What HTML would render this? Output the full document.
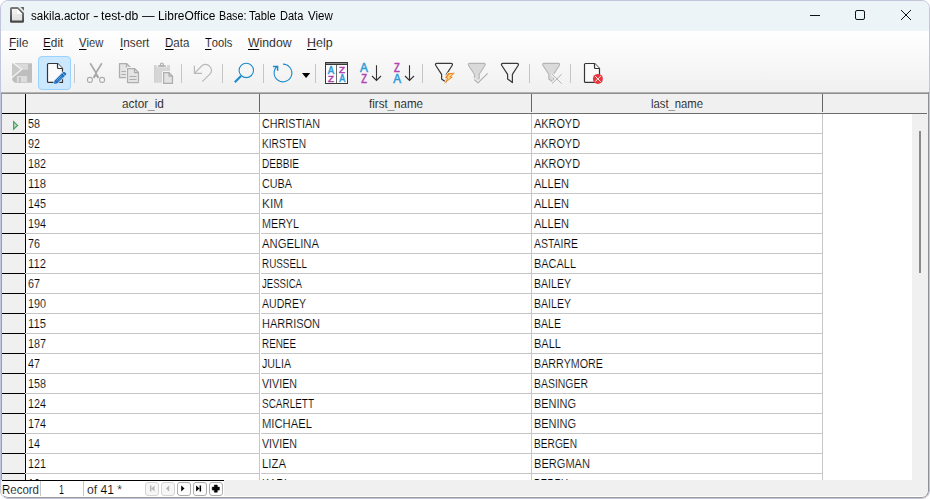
<!DOCTYPE html>
<html><head><meta charset="utf-8"><title>sakila.actor - test-db — LibreOffice Base: Table Data View</title>
<style>
html,body{margin:0;padding:0;background:#fff;}
body{width:930px;height:499px;overflow:hidden;position:relative;font-family:"Liberation Sans",sans-serif;font-size:12px;color:#000;}
#win{position:absolute;left:0;top:0;width:930px;height:499px;box-sizing:border-box;border:1px solid #c3c5da;border-radius:8px;background:#f0f0f0;overflow:hidden;}
#in{position:absolute;left:-1px;top:-1px;width:930px;height:499px;}
.a{position:absolute;}
.t{-webkit-text-stroke:0.15px #fff;position:absolute;white-space:pre;line-height:14px;height:14px;transform-origin:0 50%;display:block;}
.t u{text-decoration:none;border-bottom:1px solid #000;display:inline-block;line-height:12px;}
#title{left:1px;top:1px;width:928px;height:30px;background:#edf4f8;}
#bars{left:1px;top:31px;width:928px;height:61px;background:linear-gradient(#ffffff,#f0f0f0);}
.sep{position:absolute;width:1px;height:19px;top:64px;background:#c6c6c6;}
.hl{position:absolute;height:1px;}
.vl{position:absolute;width:1px;}
.nb{position:absolute;top:482px;width:14px;height:14px;box-sizing:border-box;border:1px solid #adadad;border-radius:3px;background:#fdfdfd;}
.nb.d{border-color:#d4d4d4;background:#f6f6f6;}
svg{position:absolute;overflow:visible;}
</style></head><body>
<div id="win"><div id="in">
<div class="a" id="title"></div>
<div class="a" id="bars"></div>

<svg style="left:0;top:0" width="32" height="30" viewBox="0 0 32 30">
<defs><linearGradient id="ig" x1="0" y1="0" x2="0" y2="1"><stop offset="0" stop-color="#f6f6f6"/><stop offset="1" stop-color="#dedede"/></linearGradient>
<linearGradient id="ib" x1="0" y1="0" x2="0" y2="1"><stop offset="0" stop-color="#7c7c7c"/><stop offset="1" stop-color="#444444"/></linearGradient></defs>
<path d="M11.6 7 H18 L24 13 V21.2 Q24 22.8 22.4 22.8 H11.6 Q10 22.8 10 21.2 V8.6 Q10 7 11.6 7 Z" fill="url(#ib)"/>
<path d="M12 8.9 H17.3 L22.1 13.7 V20.6 H12 Z" fill="url(#ig)"/>
<path d="M16.6 8.9 H17.3 L22.1 13.7 V14.6 H16.6 Z" fill="#ffffff"/>
<path d="M16.6 14.9 H22.1" stroke="#d2d2d2" stroke-width="0.7"/><path d="M16.3 9 V14.8" stroke="#e2e2e2" stroke-width="0.6"/>
<path d="M20.3 7 H24 V10.7 Z" fill="#686868"/>
</svg>
<div class="a" style="left:0;top:9px;height:14px;width:340px;will-change:transform"><span class="t" style="left:30.62px;top:0;transform:scaleX(0.9667);-webkit-text-stroke-width:0">sakila.actor</span> <span class="t" style="left:92.70px;top:0;transform:scaleX(1.4000);-webkit-text-stroke-width:0">-</span> <span class="t" style="left:101.35px;top:0;transform:scaleX(1.0139);-webkit-text-stroke-width:0">test-db</span> <span class="t" style="left:142.40px;top:0;transform:scaleX(1.0500);-webkit-text-stroke-width:0">—</span> <span class="t" style="left:158.21px;top:0;transform:scaleX(0.9920);-webkit-text-stroke-width:0">LibreOffice</span> <span class="t" style="left:219.01px;top:0;transform:scaleX(0.8939);-webkit-text-stroke-width:0">Base:</span> <span class="t" style="left:249.27px;top:0;transform:scaleX(0.9321);-webkit-text-stroke-width:0">Table</span> <span class="t" style="left:279.78px;top:0;transform:scaleX(0.9184);-webkit-text-stroke-width:0">Data</span> <span class="t" style="left:307.70px;top:0;transform:scaleX(0.9592);-webkit-text-stroke-width:0">View</span></div>
<svg style="left:800px;top:0" width="128" height="30" viewBox="0 0 128 30" fill="none" stroke="#111" stroke-width="1">
<path d="M10 15.5 H20"/>
<rect x="55.5" y="10.5" width="9" height="9" rx="1.5"/>
<path d="M101 10 L111 20 M111 10 L101 20"/>
</svg>
<span class="t" style="left:8.8px;top:36px;transform:scaleX(0.9977);-webkit-text-stroke-color:#fbfbfb;"><u>F</u>ile</span>
<span class="t" style="left:42.8px;top:36px;transform:scaleX(0.9813);-webkit-text-stroke-color:#fbfbfb;"><u>E</u>dit</span>
<span class="t" style="left:79px;top:36px;transform:scaleX(0.9303);-webkit-text-stroke-color:#fbfbfb;"><u>V</u>iew</span>
<span class="t" style="left:119.7px;top:36px;transform:scaleX(0.9762);-webkit-text-stroke-color:#fbfbfb;"><u>I</u>nsert</span>
<span class="t" style="left:164.7px;top:36px;transform:scaleX(0.9582);-webkit-text-stroke-color:#fbfbfb;"><u>D</u>ata</span>
<span class="t" style="left:205.2px;top:36px;transform:scaleX(0.9281);-webkit-text-stroke-color:#fbfbfb;"><u>T</u>ools</span>
<span class="t" style="left:248.1px;top:36px;transform:scaleX(1.0214);-webkit-text-stroke-color:#fbfbfb;"><u>W</u>indow</span>
<span class="t" style="left:307.3px;top:36px;transform:scaleX(1.0370);-webkit-text-stroke-color:#fbfbfb;"><u>H</u>elp</span>
<div class="a" style="left:38px;top:56px;width:33px;height:34px;box-sizing:border-box;border:1px solid #99d1ff;border-radius:4px;background:#cce8ff"></div>
<div class="sep" style="left:74px"></div>
<div class="sep" style="left:181px"></div>
<div class="sep" style="left:222px"></div>
<div class="sep" style="left:263px"></div>
<div class="sep" style="left:315px"></div>
<div class="sep" style="left:422px"></div>
<div class="sep" style="left:529px"></div>
<div class="sep" style="left:570px"></div>
<svg style="left:0;top:54px" width="930" height="40" viewBox="0 54 930 40" fill="none">
<g>
<path d="M12.2 63.2 H32 V82.8 H14.8 L12.2 80.2 Z" fill="#bebebe"/>
<path d="M16 64 H28 V69.8 H16 Z" fill="#dadada"/>
<path d="M16.9 76 H27.1 V82.1 H16.9 Z" fill="#dcdcdc"/>
<path d="M19 77.2 H20.8 V82.8 H19 Z" fill="#bebebe"/>
<path d="M12.2 63.2 L21.2 69.5 L12.2 76.8 Z" fill="#c9c9c9"/>
<path d="M13 62.8 L21.7 69.5 L12 77.5" fill="none" stroke="#f7f7f7" stroke-width="1.1"/>
</g>
<g>
<path d="M48.5 63.5 H57.5 L62.5 68.5 V82.4 H48.5 Q47.5 82.4 47.5 81.4 V64.5 Q47.5 63.5 48.5 63.5 Z" fill="#fafafa" stroke="#353535" stroke-width="1.2" stroke-linejoin="round"/>
<path d="M57.5 63.5 V67.5 Q57.5 68.5 58.5 68.5 H62.5" fill="#fafafa" stroke="#353535" stroke-width="1.2" stroke-linejoin="round"/>
<path d="M53.9 83.9 L54.7 80.4 L62.9 72.2 Q63.9 71.3 64.9 72.2 L65.9 73.2 Q66.7 74.1 65.9 75 L57.6 83.2 Z" fill="#1c6dbe" stroke="#e8f2fb" stroke-width="1.2" paint-order="stroke" stroke-linejoin="round"/>
<path d="M56.5 80.6 L61.6 75.5 M57.7 81.8 L62.8 76.7" stroke="#7ab2e8" stroke-width="0.8"/>
<path d="M62.2 73 L65.1 75.9" stroke="#a8d0f4" stroke-width="0.8"/>
<path d="M53.9 83.9 L54.5 81.6 L56.4 83.4 Z" fill="#4f97dc"/>
</g>
<g stroke="#ababab" fill="none">
<path d="M90.2 63.3 L96 72.8 L101.8 63.3" stroke-width="1.7" stroke-linejoin="miter"/>
<path d="M93.5 77.8 L96 74.2 L98.5 77.8" stroke-width="2.1" stroke="#a6a6a6"/>
<circle cx="89.9" cy="79.9" r="2.5" fill="#f7f7f7" stroke-width="1.1"/><circle cx="102.1" cy="79.9" r="2.5" fill="#f7f7f7" stroke-width="1.1"/>
</g>
<g stroke="#adadad" stroke-width="1.25" fill="#e4e4e4" stroke-linejoin="round">
<path d="M119.5 63.5 H126.5 L130.5 67.5 V77.5 H119.5 Z"/>
<path d="M126.5 63.5 V67.5 H130.5" fill="none"/>
<path d="M121.5 71.5 H127 M121.5 74.5 H127" stroke-width="1"/>
<path d="M127.5 68.5 H134.5 L138.5 72.5 V82.5 H127.5 Z" stroke="#f6f6f6" stroke-width="3.2"/>
<path d="M127.5 68.5 H134.5 L138.5 72.5 V82.5 H127.5 Z"/>
<path d="M134.5 68.5 V72.5 H138.5" fill="none"/>
<path d="M129.5 76.5 H136.5 M129.5 79.5 H136.5" stroke-width="1"/>
</g>
<g>
<path d="M154.2 65.1 H170 V82.8 H154.2 Z" fill="#d6d6d6"/>
<path d="M154.6 65.1 V82.8" stroke="#cdcdcd" stroke-width="0.8"/>
<path d="M156.8 65 H167 V67.3 H156.8 Z" fill="#f6f6f6"/>
<circle cx="161.9" cy="64.5" r="1.5" fill="#efefef" stroke="#adadad" stroke-width="1.1"/>
<path d="M158 65.2 H165.8 V66.8 H158 Z" fill="#adadad"/>
<path d="M163.6 72.6 H169 L172.5 76.1 V83.4 H163.6 Z" fill="#e3e3e3" stroke="#f5f5f5" stroke-width="3.2" stroke-linejoin="round"/>
<path d="M163.6 72.6 H169 L172.5 76.1 V83.4 H163.6 Z" fill="#e3e3e3" stroke="#adadad" stroke-width="1.25" stroke-linejoin="round"/>
<path d="M169 72.6 V76.1 H172.5" fill="none" stroke="#adadad" stroke-width="1.25" stroke-linejoin="round"/>
</g>
<g stroke="#b9b9b9" stroke-width="1.2">
<path d="M194.4 65.8 V73.4 H202"/>
<path d="M194.4 73.4 L202.4 65.3 A5.9 5.9 0 0 1 210.3 73.7 L202.3 81.6"/>
</g>
<g stroke="#1e8bcd">
<circle cx="246.3" cy="70.4" r="7.2" stroke-width="1.1"/>
<path d="M241 76 L234.8 82.3" stroke-width="2.2" stroke-linecap="butt"/>
</g>
<g stroke="#1e8bcd" stroke-width="1.1">
<path d="M283 64.1 A8.85 8.85 0 1 1 277.5 66"/>
<path d="M272.9 66.5 H277.6 V70.8" stroke-width="1.5"/>
</g>
<path d="M302 73 H310.2 L306.1 78 Z" fill="#000"/>
<g>
<rect x="325.5" y="62.5" width="22" height="21" fill="#fdfdfd" stroke="#383838" stroke-width="1"/>
<rect x="325" y="62" width="23" height="3" fill="#383838"/>
<path d="M326 63.5 H347" stroke="#8c8c8c" stroke-width="1"/>
<path d="M336.5 65 V83" stroke="#6a6a6a" stroke-width="1"/>
</g>
<text x="327.80" y="73.60" font-family="Liberation Sans, sans-serif" font-size="10.20" fill="#2d9bd8" textLength="6.40" lengthAdjust="spacingAndGlyphs" stroke="#2d9bd8" stroke-width="0.5">A</text>
<text x="328.00" y="81.60" font-family="Liberation Sans, sans-serif" font-size="9.22" fill="#b242b2" textLength="5.90" lengthAdjust="spacingAndGlyphs" stroke="#b242b2" stroke-width="0.5">Z</text>
<text x="339.00" y="72.90" font-family="Liberation Sans, sans-serif" font-size="9.64" fill="#b242b2" textLength="6.00" lengthAdjust="spacingAndGlyphs" stroke="#b242b2" stroke-width="0.5">Z</text>
<text x="339.20" y="81.70" font-family="Liberation Sans, sans-serif" font-size="10.06" fill="#2d9bd8" textLength="6.00" lengthAdjust="spacingAndGlyphs" stroke="#2d9bd8" stroke-width="0.5">A</text>
<text x="360.10" y="71.70" font-family="Liberation Sans, sans-serif" font-size="12.15" fill="#2d9bd8" textLength="7.90" lengthAdjust="spacingAndGlyphs" stroke="#2d9bd8" stroke-width="0.5">A</text>
<text x="361.20" y="82.70" font-family="Liberation Sans, sans-serif" font-size="12.01" fill="#b242b2" textLength="5.70" lengthAdjust="spacingAndGlyphs" stroke="#b242b2" stroke-width="0.5">Z</text>
<path d="M376.5 65.2 V80.4 M372 76 L376.5 80.5 L381 76" stroke="#333" stroke-width="1.1"/>
<text x="394.10" y="71.70" font-family="Liberation Sans, sans-serif" font-size="12.01" fill="#b242b2" textLength="5.80" lengthAdjust="spacingAndGlyphs" stroke="#b242b2" stroke-width="0.5">Z</text>
<text x="393.20" y="82.70" font-family="Liberation Sans, sans-serif" font-size="12.15" fill="#2d9bd8" textLength="7.80" lengthAdjust="spacingAndGlyphs" stroke="#2d9bd8" stroke-width="0.5">A</text>
<path d="M409.5 65.2 V80.4 M405 76 L409.5 80.5 L414 76" stroke="#333" stroke-width="1.1"/>
<path d="M436.80 63.4 H451.10 Q453.10 63.4 452.10 65.5 L446.40 74.3 V82.5 L441.60 79 V74.3 L435.80 65.5 Q434.80 63.4 436.80 63.4 Z" stroke="#3a3a38" stroke-width="1.25" fill="none" stroke-linejoin="round"/>
<path d="M448.2 72.9 L455 72.7 L451.1 76.6 L453 77.1 L444 84 L447.1 78.4 L445 77.8 Z" fill="#ef8c2c" stroke="#f8f8f8" stroke-width="1.4" paint-order="stroke"/>
<path d="M449.4 74.2 L452.4 74.1 L449.2 77.1 L450.8 77.6 L446.8 80.8 L448.6 77.9 L447 77.4 Z" fill="#f9dc8c"/>
<path d="M469.60 63.4 H483.90 Q485.90 63.4 484.90 65.5 L479.20 74.3 V82.5 L474.40 79 V74.3 L468.60 65.5 Q467.60 63.4 469.60 63.4 Z" stroke="#b4b4b4" stroke-width="1.1" fill="#dadada" stroke-linejoin="round"/>
<path d="M473.6 78.9 L478 83 L488.2 73" stroke="#f5f5f5" stroke-width="3.4"/>
<path d="M474.3 79.5 L478 82.9 L487.6 73.4" stroke="#b2b2b2" stroke-width="1.3"/>
<path d="M502.80 63.4 H517.10 Q519.10 63.4 518.10 65.5 L512.40 74.3 V82.5 L507.60 79 V74.3 L501.80 65.5 Q500.80 63.4 502.80 63.4 Z" stroke="#3a3a38" stroke-width="1.25" fill="none" stroke-linejoin="round"/>
<path d="M544.00 63.4 H558.30 Q560.30 63.4 559.30 65.5 L553.60 74.3 V82.5 L548.80 79 V74.3 L543.00 65.5 Q542.00 63.4 544.00 63.4 Z" stroke="#b4b4b4" stroke-width="1.1" fill="#dadada" stroke-linejoin="round"/>
<path d="M552 74.2 L561.7 83.7 M561.7 74.2 L552 83.7" stroke="#f5f5f5" stroke-width="3"/>
<path d="M552 74.2 L561.7 83.7 M561.7 74.2 L552 83.7" stroke="#b0b0b0" stroke-width="1"/>
<g>
<path d="M585.5 63.5 H594.5 L599.5 68.5 V82.4 H585.5 Q584.5 82.4 584.5 81.4 V64.5 Q584.5 63.5 585.5 63.5 Z" fill="#fafafa" stroke="#353535" stroke-width="1.2" stroke-linejoin="round"/>
<path d="M594.5 63.5 V67.5 Q594.5 68.5 595.5 68.5 H599.5" fill="#fafafa" stroke="#353535" stroke-width="1.2" stroke-linejoin="round"/>
<circle cx="597.9" cy="78.9" r="5" fill="#e8383f"/>
<path d="M595.1 76.1 L600.7 81.7 M600.7 76.1 L595.1 81.7" stroke="#fff" stroke-width="0.9"/>
</g>
</svg>
<div class="a" style="left:1px;top:92px;width:927px;height:1px;background:#b4b4b4"></div>
<div class="a" style="left:1px;top:93px;width:927px;height:1px;background:#8e8e8e"></div>
<div class="a" style="left:26px;top:114px;width:886px;height:366px;background:#fff"></div>
<div class="hl" style="left:2px;top:113px;width:24px;background:#000"></div>
<div class="hl" style="left:26px;top:113px;width:901px;background:#6e6e6e"></div>
<div class="vl" style="left:25px;top:94px;height:386px;background:#000"></div>
<div class="vl" style="left:259px;top:94px;height:18px;background:#666"></div>
<div class="vl" style="left:259px;top:114px;height:366px;background:#c6c6c6"></div>
<div class="vl" style="left:531px;top:94px;height:18px;background:#666"></div>
<div class="vl" style="left:531px;top:114px;height:366px;background:#c6c6c6"></div>
<div class="vl" style="left:822px;top:94px;height:18px;background:#666"></div>
<div class="vl" style="left:822px;top:114px;height:366px;background:#c6c6c6"></div>
<div class="vl" style="left:1px;top:94px;height:386px;background:#a0a0a0"></div>
<div class="hl" style="left:2px;top:133px;width:23px;background:#000"></div>
<div class="hl" style="left:26px;top:133px;width:797px;background:#c6c6c6"></div>
<div class="hl" style="left:25px;top:133px;width:1px;background:#e8e8e8"></div>
<div class="hl" style="left:260px;top:133px;width:1px;background:#fff"></div>
<div class="hl" style="left:2px;top:153px;width:23px;background:#000"></div>
<div class="hl" style="left:26px;top:153px;width:797px;background:#c6c6c6"></div>
<div class="hl" style="left:25px;top:153px;width:1px;background:#e8e8e8"></div>
<div class="hl" style="left:260px;top:153px;width:1px;background:#fff"></div>
<div class="hl" style="left:2px;top:173px;width:23px;background:#000"></div>
<div class="hl" style="left:26px;top:173px;width:797px;background:#c6c6c6"></div>
<div class="hl" style="left:25px;top:173px;width:1px;background:#e8e8e8"></div>
<div class="hl" style="left:260px;top:173px;width:1px;background:#fff"></div>
<div class="hl" style="left:2px;top:193px;width:23px;background:#000"></div>
<div class="hl" style="left:26px;top:193px;width:797px;background:#c6c6c6"></div>
<div class="hl" style="left:25px;top:193px;width:1px;background:#e8e8e8"></div>
<div class="hl" style="left:260px;top:193px;width:1px;background:#fff"></div>
<div class="hl" style="left:2px;top:213px;width:23px;background:#000"></div>
<div class="hl" style="left:26px;top:213px;width:797px;background:#c6c6c6"></div>
<div class="hl" style="left:25px;top:213px;width:1px;background:#e8e8e8"></div>
<div class="hl" style="left:260px;top:213px;width:1px;background:#fff"></div>
<div class="hl" style="left:2px;top:233px;width:23px;background:#000"></div>
<div class="hl" style="left:26px;top:233px;width:797px;background:#c6c6c6"></div>
<div class="hl" style="left:25px;top:233px;width:1px;background:#e8e8e8"></div>
<div class="hl" style="left:260px;top:233px;width:1px;background:#fff"></div>
<div class="hl" style="left:2px;top:253px;width:23px;background:#000"></div>
<div class="hl" style="left:26px;top:253px;width:797px;background:#c6c6c6"></div>
<div class="hl" style="left:25px;top:253px;width:1px;background:#e8e8e8"></div>
<div class="hl" style="left:260px;top:253px;width:1px;background:#fff"></div>
<div class="hl" style="left:2px;top:273px;width:23px;background:#000"></div>
<div class="hl" style="left:26px;top:273px;width:797px;background:#c6c6c6"></div>
<div class="hl" style="left:25px;top:273px;width:1px;background:#e8e8e8"></div>
<div class="hl" style="left:260px;top:273px;width:1px;background:#fff"></div>
<div class="hl" style="left:2px;top:293px;width:23px;background:#000"></div>
<div class="hl" style="left:26px;top:293px;width:797px;background:#c6c6c6"></div>
<div class="hl" style="left:25px;top:293px;width:1px;background:#e8e8e8"></div>
<div class="hl" style="left:260px;top:293px;width:1px;background:#fff"></div>
<div class="hl" style="left:2px;top:313px;width:23px;background:#000"></div>
<div class="hl" style="left:26px;top:313px;width:797px;background:#c6c6c6"></div>
<div class="hl" style="left:25px;top:313px;width:1px;background:#e8e8e8"></div>
<div class="hl" style="left:260px;top:313px;width:1px;background:#fff"></div>
<div class="hl" style="left:2px;top:333px;width:23px;background:#000"></div>
<div class="hl" style="left:26px;top:333px;width:797px;background:#c6c6c6"></div>
<div class="hl" style="left:25px;top:333px;width:1px;background:#e8e8e8"></div>
<div class="hl" style="left:260px;top:333px;width:1px;background:#fff"></div>
<div class="hl" style="left:2px;top:353px;width:23px;background:#000"></div>
<div class="hl" style="left:26px;top:353px;width:797px;background:#c6c6c6"></div>
<div class="hl" style="left:25px;top:353px;width:1px;background:#e8e8e8"></div>
<div class="hl" style="left:260px;top:353px;width:1px;background:#fff"></div>
<div class="hl" style="left:2px;top:373px;width:23px;background:#000"></div>
<div class="hl" style="left:26px;top:373px;width:797px;background:#c6c6c6"></div>
<div class="hl" style="left:25px;top:373px;width:1px;background:#e8e8e8"></div>
<div class="hl" style="left:260px;top:373px;width:1px;background:#fff"></div>
<div class="hl" style="left:2px;top:393px;width:23px;background:#000"></div>
<div class="hl" style="left:26px;top:393px;width:797px;background:#c6c6c6"></div>
<div class="hl" style="left:25px;top:393px;width:1px;background:#e8e8e8"></div>
<div class="hl" style="left:260px;top:393px;width:1px;background:#fff"></div>
<div class="hl" style="left:2px;top:413px;width:23px;background:#000"></div>
<div class="hl" style="left:26px;top:413px;width:797px;background:#c6c6c6"></div>
<div class="hl" style="left:25px;top:413px;width:1px;background:#e8e8e8"></div>
<div class="hl" style="left:260px;top:413px;width:1px;background:#fff"></div>
<div class="hl" style="left:2px;top:433px;width:23px;background:#000"></div>
<div class="hl" style="left:26px;top:433px;width:797px;background:#c6c6c6"></div>
<div class="hl" style="left:25px;top:433px;width:1px;background:#e8e8e8"></div>
<div class="hl" style="left:260px;top:433px;width:1px;background:#fff"></div>
<div class="hl" style="left:2px;top:453px;width:23px;background:#000"></div>
<div class="hl" style="left:26px;top:453px;width:797px;background:#c6c6c6"></div>
<div class="hl" style="left:25px;top:453px;width:1px;background:#e8e8e8"></div>
<div class="hl" style="left:260px;top:453px;width:1px;background:#fff"></div>
<div class="hl" style="left:2px;top:473px;width:23px;background:#000"></div>
<div class="hl" style="left:26px;top:473px;width:797px;background:#c6c6c6"></div>
<div class="hl" style="left:25px;top:473px;width:1px;background:#e8e8e8"></div>
<div class="hl" style="left:260px;top:473px;width:1px;background:#fff"></div>
<span class="t" style="left:122px;top:97px;transform:scaleX(0.9789);-webkit-text-stroke-color:#f0f0f0;">actor_id</span>
<span class="t" style="left:369px;top:97px;transform:scaleX(0.9637);-webkit-text-stroke-color:#f0f0f0;">first_name</span>
<span class="t" style="left:651px;top:97px;transform:scaleX(0.9391);-webkit-text-stroke-color:#f0f0f0;">last_name</span>
<span class="t" style="left:28px;top:117px;transform:scaleX(0.8982);">58</span>
<span class="t" style="left:262px;top:117px;transform:scaleX(0.8968);">CHRISTIAN</span>
<span class="t" style="left:534px;top:117px;transform:scaleX(0.9075);">AKROYD</span>
<span class="t" style="left:28px;top:137px;transform:scaleX(0.8982);">92</span>
<span class="t" style="left:262px;top:137px;transform:scaleX(0.8459);">KIRSTEN</span>
<span class="t" style="left:534px;top:137px;transform:scaleX(0.9075);">AKROYD</span>
<span class="t" style="left:28px;top:157px;transform:scaleX(0.8986);">182</span>
<span class="t" style="left:262px;top:157px;transform:scaleX(0.8406);">DEBBIE</span>
<span class="t" style="left:534px;top:157px;transform:scaleX(0.9075);">AKROYD</span>
<span class="t" style="left:28px;top:177px;transform:scaleX(0.9404);">118</span>
<span class="t" style="left:262px;top:177px;transform:scaleX(0.8997);">CUBA</span>
<span class="t" style="left:534px;top:177px;transform:scaleX(0.9203);">ALLEN</span>
<span class="t" style="left:28px;top:197px;transform:scaleX(0.8986);">145</span>
<span class="t" style="left:262px;top:197px;transform:scaleX(0.9839);">KIM</span>
<span class="t" style="left:534px;top:197px;transform:scaleX(0.9203);">ALLEN</span>
<span class="t" style="left:28px;top:217px;transform:scaleX(0.8986);">194</span>
<span class="t" style="left:262px;top:217px;transform:scaleX(0.8994);">MERYL</span>
<span class="t" style="left:534px;top:217px;transform:scaleX(0.9203);">ALLEN</span>
<span class="t" style="left:28px;top:237px;transform:scaleX(0.8982);">76</span>
<span class="t" style="left:262px;top:237px;transform:scaleX(0.9392);">ANGELINA</span>
<span class="t" style="left:534px;top:237px;transform:scaleX(0.8718);">ASTAIRE</span>
<span class="t" style="left:28px;top:257px;transform:scaleX(0.9404);">112</span>
<span class="t" style="left:262px;top:257px;transform:scaleX(0.8226);">RUSSELL</span>
<span class="t" style="left:534px;top:257px;transform:scaleX(0.9124);">BACALL</span>
<span class="t" style="left:28px;top:277px;transform:scaleX(0.8982);">67</span>
<span class="t" style="left:262px;top:277px;transform:scaleX(0.7998);">JESSICA</span>
<span class="t" style="left:534px;top:277px;transform:scaleX(0.8803);">BAILEY</span>
<span class="t" style="left:28px;top:297px;transform:scaleX(0.8986);">190</span>
<span class="t" style="left:262px;top:297px;transform:scaleX(0.8797);">AUDREY</span>
<span class="t" style="left:534px;top:297px;transform:scaleX(0.8803);">BAILEY</span>
<span class="t" style="left:28px;top:317px;transform:scaleX(0.9404);">115</span>
<span class="t" style="left:262px;top:317px;transform:scaleX(0.9156);">HARRISON</span>
<span class="t" style="left:534px;top:317px;transform:scaleX(0.8798);">BALE</span>
<span class="t" style="left:28px;top:337px;transform:scaleX(0.8986);">187</span>
<span class="t" style="left:262px;top:337px;transform:scaleX(0.8224);">RENEE</span>
<span class="t" style="left:534px;top:337px;transform:scaleX(0.9196);">BALL</span>
<span class="t" style="left:28px;top:357px;transform:scaleX(0.8982);">47</span>
<span class="t" style="left:262px;top:357px;transform:scaleX(0.8872);">JULIA</span>
<span class="t" style="left:534px;top:357px;transform:scaleX(0.8945);">BARRYMORE</span>
<span class="t" style="left:28px;top:377px;transform:scaleX(0.8986);">158</span>
<span class="t" style="left:262px;top:377px;transform:scaleX(0.8892);">VIVIEN</span>
<span class="t" style="left:534px;top:377px;transform:scaleX(0.8707);">BASINGER</span>
<span class="t" style="left:28px;top:397px;transform:scaleX(0.8986);">124</span>
<span class="t" style="left:262px;top:397px;transform:scaleX(0.8295);">SCARLETT</span>
<span class="t" style="left:534px;top:397px;transform:scaleX(0.9127);">BENING</span>
<span class="t" style="left:28px;top:417px;transform:scaleX(0.8986);">174</span>
<span class="t" style="left:262px;top:417px;transform:scaleX(0.9373);">MICHAEL</span>
<span class="t" style="left:534px;top:417px;transform:scaleX(0.9127);">BENING</span>
<span class="t" style="left:28px;top:437px;transform:scaleX(0.8982);">14</span>
<span class="t" style="left:262px;top:437px;transform:scaleX(0.8892);">VIVIEN</span>
<span class="t" style="left:534px;top:437px;transform:scaleX(0.8483);">BERGEN</span>
<span class="t" style="left:28px;top:457px;transform:scaleX(0.8986);">121</span>
<span class="t" style="left:262px;top:457px;transform:scaleX(0.9470);">LIZA</span>
<span class="t" style="left:534px;top:457px;transform:scaleX(0.9228);">BERGMAN</span>
<span class="t" style="left:28px;top:477px;transform:scaleX(0.8982);">12</span>
<span class="t" style="left:262px;top:477px;transform:scaleX(0.8929);">KARL</span>
<span class="t" style="left:534px;top:477px;transform:scaleX(0.8264);">BERRY</span>
<svg style="left:10px;top:118px" width="10" height="14" viewBox="0 0 10 14"><path d="M3.6 3.6 L7.6 7.4 L3.6 11.2 Z" fill="#b4dcbc" stroke="#3fa05c" stroke-width="1.1" stroke-linejoin="miter"/></svg>
<div class="a" style="left:912px;top:114px;width:16px;height:366px;background:#f0f0f0"></div>
<div class="a" style="left:919px;top:131px;width:2px;height:142px;background:#8a8a8a"></div>
<div class="a" style="left:1px;top:480px;width:928px;height:18px;background:#f0f0f0"></div>
<div class="hl" style="left:1px;top:496px;width:927px;background:#fff"></div>
<div class="vl" style="left:928px;top:92px;height:390px;background:#909090"></div>
<div class="a" style="left:1px;top:482px;width:928px;height:16px;box-sizing:border-box;border-right:1px solid #909090;border-bottom:1px solid #9a9a9a;border-left:1px solid transparent;border-radius:0 0 7px 7px;z-index:5"></div>
<div class="a" style="left:2px;top:481px;width:222px;height:16px;background:#fff"></div>
<div class="hl" style="left:2px;top:480px;width:222px;background:#000"></div>
<div class="vl" style="left:40px;top:481px;height:15px;background:#c8c8c8"></div>
<div class="vl" style="left:83px;top:481px;height:15px;background:#c8c8c8"></div>
<span class="t" style="left:2px;top:483px;transform:scaleX(0.9564);">Record</span>
<span class="t" style="left:58.5px;top:483px;transform:scaleX(0.7477);">1</span>
<span class="t" style="left:87.2px;top:483px;transform:scaleX(1.0086);">of 41 *</span>
<div class="nb d" style="left:145px"></div>
<div class="nb d" style="left:161px"></div>
<div class="nb" style="left:177px"></div>
<div class="nb" style="left:193px"></div>
<div class="nb" style="left:209px"></div>
<svg style="left:0;top:480px" width="230" height="19" viewBox="0 480 230 19">
<path d="M150 485.4 H151.4 V491.6 H150 Z M154.5 485.4 V491.6 L151.4 488.5 Z" fill="#b4b4b4"/>
<path d="M169.2 485.4 V491.6 L165.9 488.5 Z" fill="#b4b4b4"/>
<path d="M181.2 485.4 V491.6 L184.5 488.5 Z" fill="#000"/>
<path d="M196.1 485.4 V491.6 L199.5 488.5 Z M199.6 485.4 H201.1 V491.6 H199.6 Z" fill="#000"/>
<path d="M214.3 485 H217.3 V487.1 H219.4 V490.1 H217.3 V492.2 H214.3 V490.1 H212.2 V487.1 H214.3 Z" fill="#000" stroke="#000" stroke-width="0.5" stroke-linejoin="round"/>
</svg>
</div></div></body></html>
